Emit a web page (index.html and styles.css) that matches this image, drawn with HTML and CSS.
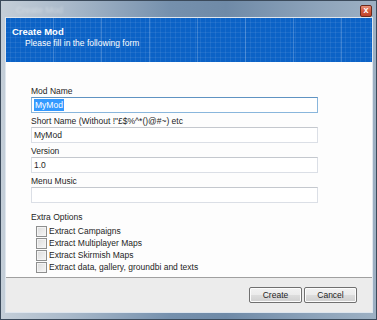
FILE: index.html
```html
<!DOCTYPE html>
<html lang="en">

<head>
    <meta charset="UTF-8">
    <title>Create Mod</title>
    <link rel="stylesheet" href="styles.css">
</head>

<body>
    <div class="window">
        <div class="titlebar">
            <span class="caption">Create Mod</span>
            <div class="close">x</div>
        </div>

        <div class="client">
            <div class="header">
                <div class="header-title">Create Mod</div>
                <div class="header-sub">Please fill in the following form</div>
            </div>

            <div class="form">
                <label class="field">
                    <span class="label-text">Mod Name</span>
                    <span class="input focused"><span class="selected">MyMod</span></span>
                </label>
                <label class="field">
                    <span class="label-text">Short Name (Without !"£$%^*()@#~) etc</span>
                    <span class="input">MyMod</span>
                </label>
                <label class="field">
                    <span class="label-text">Version</span>
                    <span class="input">1.0</span>
                </label>
                <label class="field">
                    <span class="label-text">Menu Music</span>
                    <span class="input"></span>
                </label>

                <div class="options">
                    <span class="label-text">Extra Options</span>
                    <label class="check"><span class="box"></span>Extract Campaigns</label>
                    <label class="check"><span class="box"></span>Extract Multiplayer Maps</label>
                    <label class="check"><span class="box"></span>Extract Skirmish Maps</label>
                    <label class="check"><span class="box"></span>Extract data, gallery, groundbi and texts</label>
                </div>
            </div>

            <div class="footer">
                <div class="button">Create</div>
                <div class="button">Cancel</div>
            </div>
        </div>
    </div>
</body>

</html>
```

FILE: styles.css
```css
body * {
    font-family: "Liberation Sans", Arial, sans-serif;
    box-sizing: border-box;
}

body {
    margin: 0;
    background: #ffffff;
}

.window {
    width: 377px;
    height: 320px;
    display: flex;
    flex-direction: column;
    padding: 0 4px 7px 5px;
    border: 1px solid #3b4a5b;
    background: linear-gradient(to right, #c4ced8 0%, #a9b9ca 18%, #7590ad 45%, #6f8aa7 60%, #8ea4bb 85%, #9db0c3 100%);
}

.titlebar {
    height: 17px;
    display: flex;
    align-items: center;
    justify-content: space-between;
    padding: 0 0 0 10px;
    flex-shrink: 0;
}

.caption {
    font-size: 9px;
    color: rgba(255, 255, 255, 0.35);
    filter: blur(1.2px);
}

.close {
    width: 12px;
    height: 12px;
    margin-top: 2px;
    border: 1px solid #6b2a1c;
    border-radius: 2px;
    background: linear-gradient(#e8917b, #d2593c 50%, #c2432a);
    color: #ffffff;
    font-size: 9px;
    font-weight: 700;
    line-height: 9px;
    text-align: center;
}

.client {
    flex: 1;
    display: flex;
    flex-direction: column;
    background: #ffffff;
    outline: 1px solid #dfe6ee;
}

.header {
    height: 44px;
    padding: 8px 6px 0;
    color: #ffffff;
    background-color: #0b62c6;
    background-image:
        repeating-linear-gradient(to right, transparent 0 47px, rgba(255, 255, 255, 0.2) 47px 48px),
        repeating-linear-gradient(to right, transparent 0 4px, rgba(255, 255, 255, 0.07) 4px 5px),
        repeating-linear-gradient(to bottom, transparent 0 4px, rgba(255, 255, 255, 0.07) 4px 5px);
}

.header-title {
    font-size: 9.5px;
    font-weight: 700;
    line-height: 12px;
}

.header-sub {
    font-size: 8.5px;
    line-height: 11px;
    padding-left: 13px;
}

.form {
    height: 216px;
    display: flex;
    flex-direction: column;
    gap: 2px;
    padding: 23px 0 0 25px;
    background: #fdfdfd;
    border-bottom: 1px solid #a0a0a0;
}

.field {
    display: flex;
    flex-direction: column;
}

.label-text {
    font-size: 8.5px;
    line-height: 12px;
    color: #1e1e1e;
}

.input {
    width: 287px;
    height: 16px;
    padding: 0 2px;
    border: 1px solid #dbdfe6;
    border-top-color: #c4c8ce;
    background: #ffffff;
    font-size: 8.5px;
    line-height: 14px;
    color: #1e1e1e;
}

.input.focused {
    border-color: #89b6dc;
    border-top-color: #5f93c2;
}

.selected {
    display: inline-block;
    line-height: 12px;
    margin-top: 1px;
    padding: 0 1px;
    background: #3399ff;
    color: #ffffff;
}

.options {
    display: flex;
    flex-direction: column;
    margin-top: 6px;
}

.options .label-text {
    margin-bottom: 2px;
}

.check {
    display: flex;
    align-items: center;
    gap: 2px;
    height: 12px;
    padding-left: 5px;
    font-size: 8.5px;
    color: #1e1e1e;
}

.box {
    width: 11px;
    height: 11px;
    border: 1px solid #8e8f8f;
    background: linear-gradient(135deg, #dcdcdc, #f6f6f6);
    box-shadow: inset 0 0 0 1px #f4f4f4;
}

.footer {
    flex: 1;
    display: flex;
    justify-content: flex-end;
    align-items: flex-start;
    gap: 2px;
    padding: 9px 15px 0 0;
    background: #ececec;
}

.button {
    width: 53px;
    height: 16px;
    border: 1px solid #707070;
    border-radius: 2px;
    background: linear-gradient(#f2f2f2 0%, #ebebeb 50%, #dddddd 51%, #cfcfcf 100%);
    box-shadow: inset 0 0 0 1px #fcfcfc;
    font-size: 8.5px;
    line-height: 14px;
    text-align: center;
    color: #1e1e1e;
}
```
